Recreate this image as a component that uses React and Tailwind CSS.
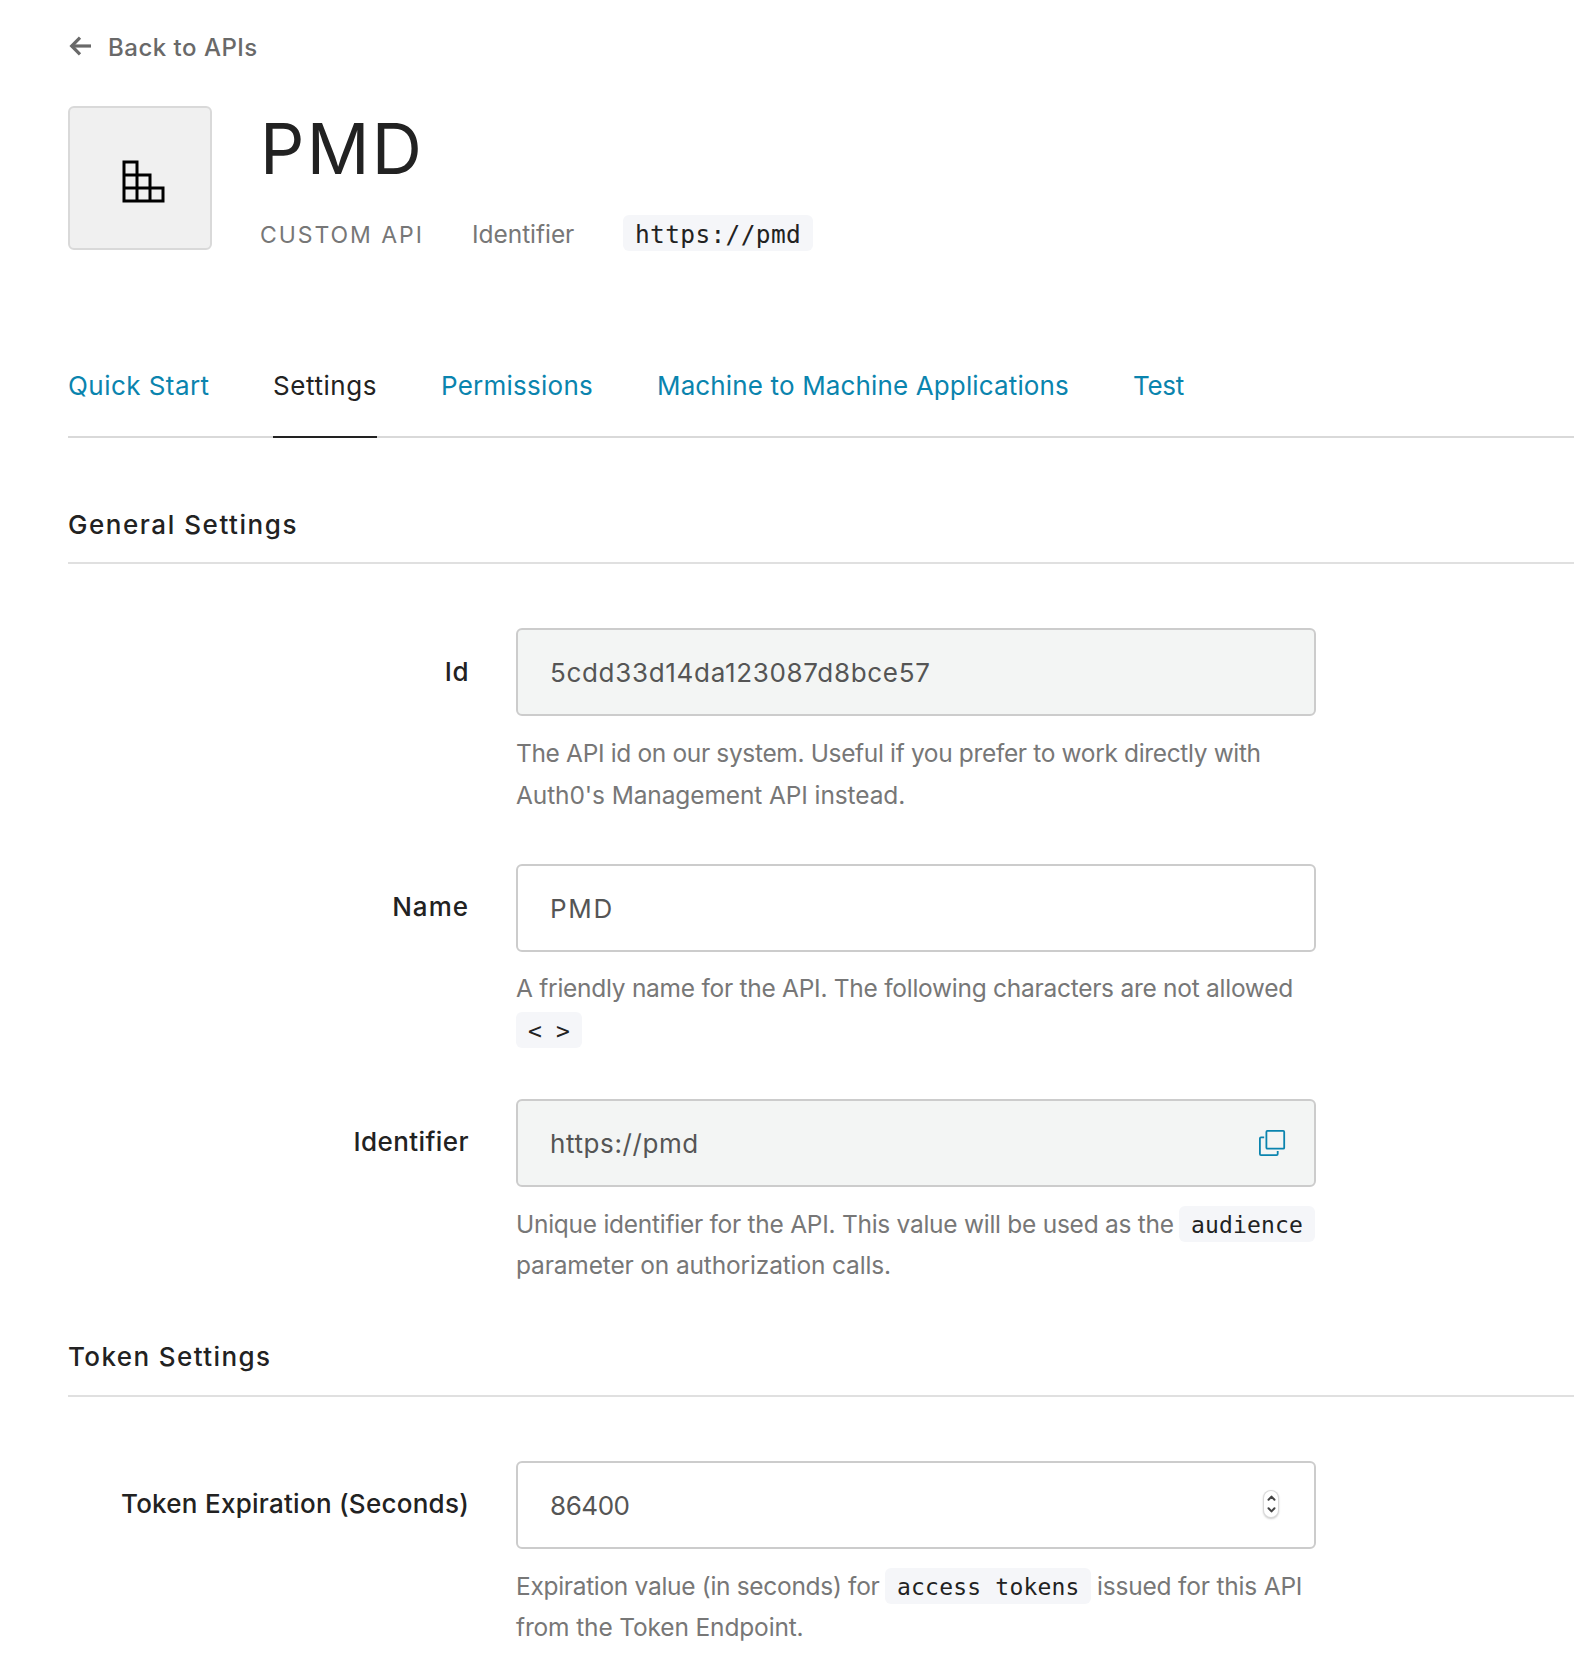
function BackArrow() {
  return (
    <svg className="mt-[6px] h-[22px] w-[24px] shrink-0" viewBox="0 0 24 22" fill="none" stroke="#696969" strokeWidth="3.2">
      <path d="M3.5 10H23" />
      <path d="M12 1.7L3.7 10L12 18.3" />
    </svg>
  );
}

function ApiIcon() {
  return (
    <svg className="ml-[7px] mt-[8px] h-[44px] w-[44px]" viewBox="0 0 44 44" fill="none" stroke="#000" strokeWidth="3">
      <path d="M2 2H15V41M2 15H28V41M2 28H41V41H2V0.5" />
    </svg>
  );
}

function CopyIcon() {
  return (
    <svg className="h-[28px] w-[28px]" viewBox="0 0 28 28" fill="none" stroke="#0a84ae" strokeWidth="1.8">
      <rect x="8.4" y="1.9" width="17.8" height="17.8" rx="1" />
      <path d="M6.2 8.3H3C2.3 8.3 1.9 8.7 1.9 9.4V25C1.9 25.7 2.3 26.1 3 26.1H18.6C19.3 26.1 19.7 25.7 19.7 25V22" />
    </svg>
  );
}

function Spinner() {
  return (
    <div className="flex h-[26px] w-[14px] items-center justify-center rounded-full bg-white shadow-[0_0_0_1px_#dadada,0_1px_2px_1px_rgba(0,0,0,0.2)]">
      <svg className="h-[22px] w-[9px]" viewBox="0 0 9 22" fill="none" stroke="#444" strokeWidth="2" strokeLinecap="round" strokeLinejoin="round">
        <path d="M1.5 6.8L4.5 3.6L7.5 6.8M1.5 15.2L4.5 18.4L7.5 15.2" />
      </svg>
    </div>
  );
}

function Code({ className = "", children }) {
  return (
    <code className={"block h-[36px] shrink-0 whitespace-pre rounded-[6px] bg-[#f5f6f9] px-3 font-['DejaVu_Sans_Mono',monospace] text-[#222] " + className}>
      {children}
    </code>
  );
}

function Tab({ className, active, children }) {
  return (
    <a
      className={
        "-mb-[2px] h-[71px] border-b-2 text-[26px] leading-[37px] whitespace-nowrap " +
        (active ? "border-[#222] text-[#222] " : "border-transparent text-[#0a84ae] ") +
        className
      }
    >
      {children}
    </a>
  );
}

function SectionTitle({ className, children }) {
  return (
    <h2 className={"border-b-2 border-[#e0e0e0] text-[26px] leading-[37px] font-medium text-[#222] " + className}>
      {children}
    </h2>
  );
}

function Field({ label, labelClass, value, valueClass, disabled, adornment, className, helpClass, children }) {
  return (
    <div className={"flex gap-[47px] " + className}>
      <label className={"w-[401px] shrink-0 text-right text-[26px] font-medium whitespace-nowrap text-[#222] " + labelClass}>
        {label}
      </label>
      <div className="w-[800px]">
        <div className={"flex h-[88px] rounded-[6px] border-2 border-[#ccc] pl-8 " + (disabled ? "bg-[#f3f5f4]" : "bg-white")}>
          <span className={"flex-1 text-[26px] leading-[86px] text-[#555] " + valueClass}>{value}</span>
          {adornment}
        </div>
        <div className={"text-[24.5px] whitespace-nowrap text-[#777] " + helpClass}>{children}</div>
      </div>
    </div>
  );
}

export default function App() {
  return (
    <div className="h-[1664px] w-full overflow-hidden bg-white pl-[68px] font-[Inter,sans-serif]">
      <a className="flex gap-[16px] pt-[30px] text-[24px] leading-[36px] font-medium text-[#696969]">
        <BackArrow />
        <span className="tracking-[0.5px]">Back to APIs</span>
      </a>

      <header className="mt-[40px] flex gap-12">
        <div className="flex h-[144px] w-[144px] items-center justify-center rounded-[6px] border-2 border-[#d9d9d9] bg-[#f0f0f0]">
          <ApiIcon />
        </div>
        <div>
          <h1 className="text-[69.5px] leading-[86px] tracking-[2.3px] text-[#222]">PMD</h1>
          <div className="mt-[23px] flex h-[36px] gap-12 whitespace-nowrap text-[#777]">
            <span className="w-[164px] text-[23px] leading-[41px] tracking-[1.94px]">CUSTOM API</span>
            <span className="w-[103px] text-[24.5px] leading-[38px] tracking-[-0.05px]">Identifier</span>
            <Code className="w-[190px] text-[24.5px] leading-[39px] tracking-[0.35px]">https://pmd</Code>
          </div>
        </div>
      </header>

      <nav className="mt-[116px] flex h-[71px] gap-16 border-b-2 border-[#d9d9d9]">
        <Tab className="w-[141px] tracking-[0.45px]">Quick Start</Tab>
        <Tab active className="w-[104px] tracking-[0.57px]">Settings</Tab>
        <Tab className="w-[152px] tracking-[0.24px]">Permissions</Tab>
        <Tab className="w-[412px] tracking-[0.14px]">Machine to Machine Applications</Tab>
        <Tab className="w-[52px] tracking-[-0.3px]">Test</Tab>
      </nav>

      <SectionTitle className="mt-[68px] pb-[19px] tracking-[1.55px]">General Settings</SectionTitle>

      <Field
        className="mt-16"
        label="Id"
        labelClass="leading-[88px] tracking-[0.5px]"
        value="5cdd33d14da123087d8bce57"
        valueClass="tracking-[0.68px]"
        disabled
        helpClass="mt-4 leading-[42px]"
      >
        <p className="tracking-[-0.35px]">The API id on our system. Useful if you prefer to work directly with</p>
        <p className="tracking-[-0.11px]">Auth0's Management API instead.</p>
      </Field>

      <Field
        className="mt-12"
        label="Name"
        labelClass="leading-[86px] tracking-[1px]"
        value="PMD"
        valueClass="tracking-[1.7px]"
        helpClass="mt-[15px] leading-[42px]"
      >
        <p className="tracking-[-0.27px]">A friendly name for the API. The following characters are not allowed</p>
        <div className="flex h-[42px] items-center">
          <Code className="w-[66px] text-[23px] leading-[38px] tracking-[0.15px]">{"< >"}</Code>
        </div>
      </Field>

      <Field
        className="mt-12"
        label="Identifier"
        labelClass="leading-[86px] tracking-[0.42px]"
        value="https://pmd"
        valueClass="tracking-[0.6px]"
        disabled
        adornment={<div className="mt-[28px] mr-[28px]"><CopyIcon /></div>}
        helpClass="mt-[17px] leading-[41px]"
      >
        <div className="flex h-[41px] items-start">
          <span className="w-[663px] tracking-[-0.27px]">Unique identifier for the API. This value will be used as the</span>
          <Code className="mt-[2px] w-[136px] text-[23px] leading-[38px] tracking-[0.15px]">audience</Code>
        </div>
        <p className="tracking-[-0.157px]">parameter on authorization calls.</p>
      </Field>

      <SectionTitle className="mt-[52px] pb-[20px] tracking-[1.4px]">Token Settings</SectionTitle>

      <Field
        className="mt-16"
        label="Token Expiration (Seconds)"
        labelClass="leading-[86px] tracking-[0.26px]"
        value="86400"
        valueClass="tracking-[-0.45px]"
        adornment={<div className="mt-[28px] mr-[36px]"><Spinner /></div>}
        helpClass="mt-[17px] leading-[41px]"
      >
        <div className="flex h-[41px] items-start">
          <span className="w-[369px] tracking-[-0.31px]">Expiration value (in seconds) for</span>
          <Code className="mt-[2px] w-[206px] text-[23px] leading-[38px] tracking-[0.2px]">access tokens</Code>
          <span className="ml-[6px] tracking-[-0.2px]">issued for this API</span>
        </div>
        <p className="tracking-[-0.15px]">from the Token Endpoint.</p>
      </Field>
    </div>
  );
}
